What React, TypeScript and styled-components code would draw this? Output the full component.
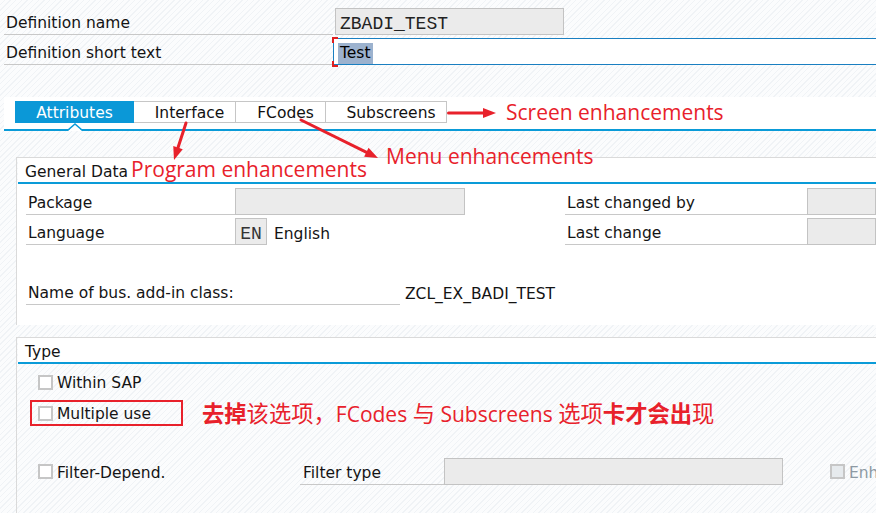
import React from "react";
import styled, { createGlobalStyle, css } from "styled-components";

const BLUE = "#0a9bd8";
const RED = "#e8212b";
const UI_FONT = `"DejaVu Sans", Verdana, sans-serif`;
const NOTE_FONT = `"Open Sans", "Noto Sans CJK SC", sans-serif`;

const GlobalStyle = createGlobalStyle`
  html, body { margin: 0; padding: 0; }
  body {
    width: 876px;
    height: 513px;
    overflow: hidden;
    background: repeating-linear-gradient(135deg, #fbfcfd 0px, #fbfcfd 3px, #f0f3f6 3px, #f0f3f6 4px);
    font-family: ${UI_FONT};
    font-size: 15.5px;
    color: #141414;
  }
`;

const Page = styled.div`
  position: relative;
  width: 876px;
  height: 513px;
  overflow: hidden;
  padding-top: 8px;
  box-sizing: border-box;
`;

const HeaderRow = styled.div`
  display: grid;
  grid-template-columns: 329px 1fr;
  height: 27px;
  margin-left: 4px;
  & + & { margin-top: 3px; }
`;

const FieldLabel = styled.div<{ $indent?: number }>`
  display: flex;
  align-items: center;
  box-sizing: border-box;
  height: 27px;
  padding-top: 4px;
  padding-left: ${(p) => p.$indent ?? 2}px;
  border-bottom: 1px solid #c8c8c8;
  white-space: nowrap;
`;

const MonoBox = styled.div`
  width: 229px;
  margin-left: 2px;
  box-sizing: border-box;
  background: #ebebeb;
  border: 1px solid #c3c3c3;
  display: flex;
  align-items: center;
  padding: 4px 0 0 4px;
  font-family: "Liberation Mono", "Courier New", monospace;
  font-size: 18px;
  color: #222;
`;

const TextInput = styled.div`
  position: relative;
  box-sizing: border-box;
  background: #fff;
  border: 1px solid #1a7fc1;
  border-right: none;
  display: flex;
  align-items: center;
  padding: 3px 0 0 4px;
  &::before, &::after {
    content: "";
    position: absolute;
    left: -2px;
    width: 4px;
    height: 4px;
    border-left: 2px solid #e02020;
  }
  &::before { top: -2px; border-top: 2px solid #e02020; }
  &::after { bottom: -3px; border-bottom: 2px solid #e02020; }
`;

const Selected = styled.span`
  background: #9cb2ce;
  line-height: 21px;
  padding: 0 2px;
  color: #000;
`;

const TabStrip = styled.div`
  margin: 32px 0 0 4px;
  height: 34px;
  box-sizing: border-box;
  background: #fff;
  border-bottom: 2px solid ${BLUE};
  padding: 4px 0 0 11px;
  display: flex;
  align-items: flex-start;
`;

const Tab = styled.div<{ $w: number; $active?: boolean }>`
  position: relative;
  width: ${(p) => p.$w}px;
  height: 22px;
  box-sizing: border-box;
  padding-top: 2px;
  display: flex;
  align-items: center;
  justify-content: center;
  white-space: nowrap;
  ${(p) =>
    p.$active
      ? css`
          background: #0b98d7;
          color: #fff;
        `
      : css`
          background: #fff;
          border: 1px solid #c6c6c6;
          border-left: none;
          padding-left: 10px;
          color: #111;
        `}
`;

const Caret = styled.svg`
  position: absolute;
  left: 50%;
  top: 100%;
  margin-left: -7px;
  overflow: visible;
`;

const NoteText = styled.span<{ $size?: number }>`
  font-family: ${NOTE_FONT};
  font-size: ${(p) => p.$size ?? 21}px;
  line-height: 1;
  color: ${RED};
  white-space: nowrap;
  b { font-weight: 700; }
`;

const Han = styled.span`
  font-family: "Noto Sans CJK SC", sans-serif;
  font-size: 22.3px;
`;

const InlineArrow = styled.svg`
  flex: none;
  margin: 6px 9px 0 0;
`;

const Panel = styled.section<{ $top: number }>`
  margin: ${(p) => p.$top}px 0 0 16px;
  border-top: 1px solid #dadada;
  border-left: 1px solid #dadada;
`;

const PanelHeader = styled.div`
  box-sizing: border-box;
  height: 26px;
  margin-left: 1px;
  display: flex;
  align-items: center;
  gap: 3px;
  padding: 4px 0 0 7px;
  background: #fff;
  border-bottom: 2px solid ${BLUE};
`;

const HeaderNote = styled(NoteText)`
  margin-top: -5px;
`;

const PanelBody = styled.div<{ $plain?: boolean }>`
  background: ${(p) => (p.$plain ? "transparent" : "#fff")};
  padding: ${(p) => (p.$plain ? "8px 0 40px 21px" : "4px 0 20px 9px")};
`;

const GenGrid = styled.div`
  display: grid;
  grid-template-columns: 209px 230px 100px 242px 1fr;
  grid-auto-rows: 27px;
  row-gap: 3px;
`;

const GreyField = styled.div<{ $w?: number }>`
  box-sizing: border-box;
  ${(p) => (p.$w ? `width: ${p.$w}px;` : "")}
  height: 27px;
  padding-top: 4px;
  background: #ebebeb;
  border: 1px solid #c3c3c3;
  display: flex;
  align-items: center;
  justify-content: center;
  font-family: "Liberation Mono", "Courier New", monospace;
  font-size: 18px;
  color: #333;
`;

const LangCell = styled.div`
  display: flex;
  align-items: center;
  gap: 7px;
`;

const Value = styled.span`
  padding-top: 4px;
  white-space: nowrap;
`;

const ClassRow = styled.div`
  display: grid;
  grid-template-columns: 374px 1fr;
  height: 27px;
  margin-top: 33px;
`;

const PlainValue = styled.div`
  display: flex;
  align-items: center;
  padding: 4px 0 0 5px;
  box-sizing: border-box;
  white-space: nowrap;
`;

const CheckRow = styled.div<{ $disabled?: boolean }>`
  display: flex;
  align-items: center;
  box-sizing: border-box;
  height: 20px;
  padding-top: 2px;
  white-space: nowrap;
  color: ${(p) => (p.$disabled ? "#8d99a3" : "inherit")};
`;

const Box = styled.span<{ $disabled?: boolean }>`
  width: 15px;
  height: 15px;
  box-sizing: border-box;
  border: 2px solid #c6c6c6;
  background: ${(p) => (p.$disabled ? "#e6eaed" : "#fff")};
  margin: -2px 4px 0 0;
  flex: none;
`;

const NoteRow = styled.div`
  display: flex;
  align-items: center;
  margin-top: 8px;
`;

const Highlight = styled.div`
  box-sizing: border-box;
  width: 153px;
  height: 26px;
  margin-left: -8px;
  padding-left: 6px;
  border: 2px solid ${RED};
  display: flex;
  align-items: center;
  margin-right: 19px;
`;

const FilterRow = styled.div`
  display: grid;
  grid-template-columns: 262px 144px 339px 47px 1fr;
  height: 27px;
  margin-top: 32px;
  align-items: center;
`;

const Overlay = styled.svg`
  position: absolute;
  left: 0;
  top: 0;
  pointer-events: none;
`;

const FloatNote = styled.div`
  position: absolute;
  left: 386px;
  top: 146px;
`;

function head(x1: number, y1: number, x2: number, y2: number, len = 13, w = 10) {
  const dx = x2 - x1;
  const dy = y2 - y1;
  const d = Math.hypot(dx, dy);
  const ux = dx / d;
  const uy = dy / d;
  const bx = x2 - ux * len;
  const by = y2 - uy * len;
  const px = -uy;
  const py = ux;
  return {
    base: [bx + ux * 2, by + uy * 2],
    points: `${x2},${y2} ${bx + (px * w) / 2},${by + (py * w) / 2} ${bx - (px * w) / 2},${by - (py * w) / 2}`,
  };
}

const Arrow: React.FC<{ x1: number; y1: number; x2: number; y2: number }> = ({ x1, y1, x2, y2 }) => {
  const h = head(x1, y1, x2, y2);
  return (
    <g>
      <line x1={x1} y1={y1} x2={h.base[0]} y2={h.base[1]} stroke={RED} strokeWidth={3} strokeLinecap="round" />
      <polygon points={h.points} fill={RED} />
    </g>
  );
};

export default function App() {
  return (
    <>
      <GlobalStyle />
      <Page>
        <HeaderRow>
          <FieldLabel>Definition name</FieldLabel>
          <MonoBox>ZBADI_TEST</MonoBox>
        </HeaderRow>
        <HeaderRow>
          <FieldLabel>Definition short text</FieldLabel>
          <TextInput>
            <Selected>Test</Selected>
          </TextInput>
        </HeaderRow>

        <TabStrip>
          <Tab $w={119} $active>
            Attributes
            <Caret width="14" height="8" viewBox="0 0 14 8">
              <polygon points="0,8 7,1 14,8" fill="#fff" />
              <polyline points="0,7 7,1 14,7" fill="none" stroke={BLUE} strokeWidth="1.6" />
            </Caret>
          </Tab>
          <Tab $w={102}>Interface</Tab>
          <Tab $w={90}>FCodes</Tab>
          <Tab $w={121}>Subscreens</Tab>
          <InlineArrow width="50" height="12" viewBox="0 0 50 12">
            <line x1="1.5" y1="6" x2="38" y2="6" stroke={RED} strokeWidth="3" strokeLinecap="round" />
            <polygon points="49,6 36,1 36,11" fill={RED} />
          </InlineArrow>
          <NoteText style={{ marginTop: 1 }}>Screen enhancements</NoteText>
        </TabStrip>

        <Panel $top={26}>
          <PanelHeader>
            <span>General Data</span>
            <HeaderNote>Program enhancements</HeaderNote>
          </PanelHeader>
          <PanelBody>
            <GenGrid>
              <FieldLabel>Package</FieldLabel>
              <GreyField />
              <span />
              <FieldLabel>Last changed by</FieldLabel>
              <GreyField />
              <FieldLabel>Language</FieldLabel>
              <LangCell>
                <GreyField $w={32}>EN</GreyField>
                <Value>English</Value>
              </LangCell>
              <span />
              <FieldLabel>Last change</FieldLabel>
              <GreyField />
            </GenGrid>
            <ClassRow>
              <FieldLabel>Name of bus. add-in class:</FieldLabel>
              <PlainValue>ZCL_EX_BADI_TEST</PlainValue>
            </ClassRow>
          </PanelBody>
        </Panel>

        <Panel $top={12}>
          <PanelHeader>
            <span>Type</span>
          </PanelHeader>
          <PanelBody $plain>
            <CheckRow>
              <Box />
              Within SAP
            </CheckRow>
            <NoteRow>
              <Highlight>
                <CheckRow>
                  <Box />
                  Multiple use
                </CheckRow>
              </Highlight>
              <NoteText>
                <Han>
                  <b>去掉</b>该选项，
                </Han>
                FCodes <Han>与</Han> Subscreens{" "}
                <Han>
                  选项<b>卡才会出</b>现
                </Han>
              </NoteText>
            </NoteRow>
            <FilterRow>
              <CheckRow>
                <Box />
                Filter-Depend.
              </CheckRow>
              <FieldLabel $indent={3}>Filter type</FieldLabel>
              <GreyField />
              <span />
              <CheckRow $disabled>
                <Box $disabled />
                Enh
              </CheckRow>
            </FilterRow>
          </PanelBody>
        </Panel>

        <FloatNote>
          <NoteText>Menu enhancements</NoteText>
        </FloatNote>
        <Overlay width="876" height="513" viewBox="0 0 876 513">
          <Arrow x1={186} y1={123} x2={174} y2={160} />
          <Arrow x1={301} y1={120} x2={378} y2={158} />
        </Overlay>
      </Page>
    </>
  );
}
